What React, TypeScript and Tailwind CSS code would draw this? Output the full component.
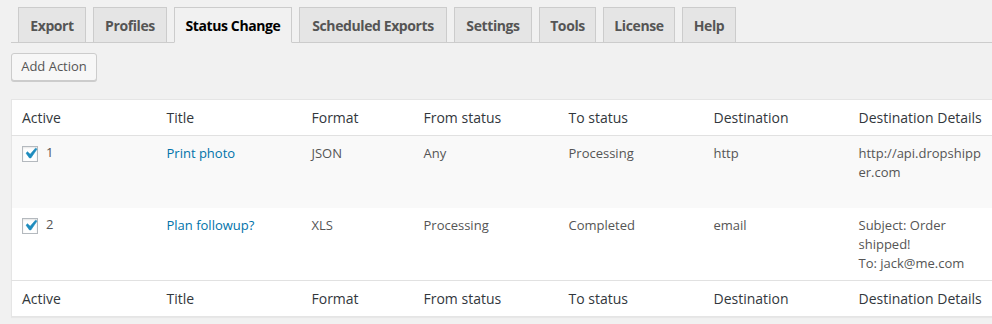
import React from "react";

const tabs = [
  { label: "Export", w: "w-[68px]" },
  { label: "Profiles", w: "w-[74px]" },
  { label: "Status Change", w: "w-[118px]", active: true },
  { label: "Scheduled Exports", w: "w-[148px]" },
  { label: "Settings", w: "w-[78px]" },
  { label: "Tools", w: "w-[57px]" },
  { label: "License", w: "w-[72px]" },
  { label: "Help", w: "w-[54px]" },
];

const rows = [
  {
    id: "1",
    title: "Print photo",
    format: "JSON",
    from: "Any",
    to: "Processing",
    dest: "http",
    details: ["http://api.dropshipp", "er.com"],
    striped: true,
  },
  {
    id: "2",
    title: "Plan followup?",
    format: "XLS",
    from: "Processing",
    to: "Completed",
    dest: "email",
    details: ["Subject: Order", "shipped!", "To: jack@me.com"],
    striped: false,
  },
];

function Checkbox() {
  return (
    <span className="relative inline-block h-4 w-4 shrink-0 border border-[#b4b9be] bg-white shadow-[inset_0_1px_2px_rgba(0,0,0,0.1)]">
      <svg viewBox="0 0 20 20" className="absolute -left-[3px] -top-[4px] h-[21px] w-[21px]">
        <path d="M14.83 4.89l1.34.94-5.81 8.38H9.02L5.78 9.67l1.34-1.25 2.57 2.4z" fill="#1e8cbe" stroke="#1e8cbe" strokeWidth="0.6" />
      </svg>
    </span>
  );
}

function HeadRow({ top }: { top?: boolean }) {
  const cols = ["Active", "Title", "Format", "From status", "To status", "Destination", "Destination Details"];
  return (
    <tr className={top ? "border-b border-[#e1e1e1]" : "border-t border-[#e1e1e1]"}>
      {cols.map((c) => (
        <th key={c} className="h-[36px] px-[10px] text-left align-middle text-[14px] font-normal leading-[19px] text-[#32373c] whitespace-nowrap">
          {c}
        </th>
      ))}
    </tr>
  );
}

export default function App() {
  return (
    <div className="min-h-[324px] w-full overflow-hidden bg-[#f1f1f1] pl-[11px] pt-[7px] font-['Open_Sans',sans-serif]">
      <div className="flex gap-[7px] border-b border-[#ccc] pl-[7px]">
        {tabs.map((t) => (
          <div
            key={t.label}
            className={`-mb-px flex h-[36px] items-center justify-center border border-[#ccc] text-[14px] font-bold tracking-[-0.4px] ${t.w} ${
              t.active ? "border-b-[#f1f1f1] bg-[#f1f1f1] text-black" : "bg-[#e5e5e5] text-[#555]"
            }`}
          >
            {t.label}
          </div>
        ))}
      </div>

      <div className="mt-[10px]">
        <button className="h-[28px] w-[86px] rounded-[3px] border border-[#ccc] bg-[#f7f7f7] text-[13px] text-[#555] shadow-[0_1px_0_#ccc]">
          Add Action
        </button>
      </div>

      <div className="mt-[18px] w-[1000px]">
        <table className="w-[982px] table-fixed border-collapse border border-[#e5e5e5] bg-white shadow-[0_1px_1px_rgba(0,0,0,0.04)]">
          <colgroup>
            <col className="w-[145px]" />
            <col className="w-[145px]" />
            <col className="w-[112px]" />
            <col className="w-[145px]" />
            <col className="w-[145px]" />
            <col className="w-[145px]" />
            <col className="w-[145px]" />
          </colgroup>
          <thead>
            <HeadRow top />
          </thead>
          <tbody>
            {rows.map((r) => (
              <tr key={r.id} className={`${r.striped ? "bg-[#f9f9f9] h-[72px]" : "bg-white h-[73px]"} text-[13px] leading-[19px] text-[#555]`}>
                <td className="px-[10px] pt-[8px] align-top">
                  <div className="flex items-center gap-[8px] pt-[2px]">
                    <Checkbox />
                    <span className="-mt-[3px]">{r.id}</span>
                  </div>
                </td>
                <td className="px-[10px] pt-[8px] align-top">
                  <a href="#" className="text-[#0073aa]">
                    {r.title}
                  </a>
                </td>
                <td className="px-[10px] pt-[8px] align-top">{r.format}</td>
                <td className="px-[10px] pt-[8px] align-top">{r.from}</td>
                <td className="px-[10px] pt-[8px] align-top">{r.to}</td>
                <td className="px-[10px] pt-[8px] align-top">{r.dest}</td>
                <td className="px-[10px] pt-[8px] align-top whitespace-nowrap">
                  {r.details.map((d) => (
                    <div key={d}>{d}</div>
                  ))}
                </td>
              </tr>
            ))}
          </tbody>
          <tfoot>
            <HeadRow />
          </tfoot>
        </table>
      </div>
    </div>
  );
}
